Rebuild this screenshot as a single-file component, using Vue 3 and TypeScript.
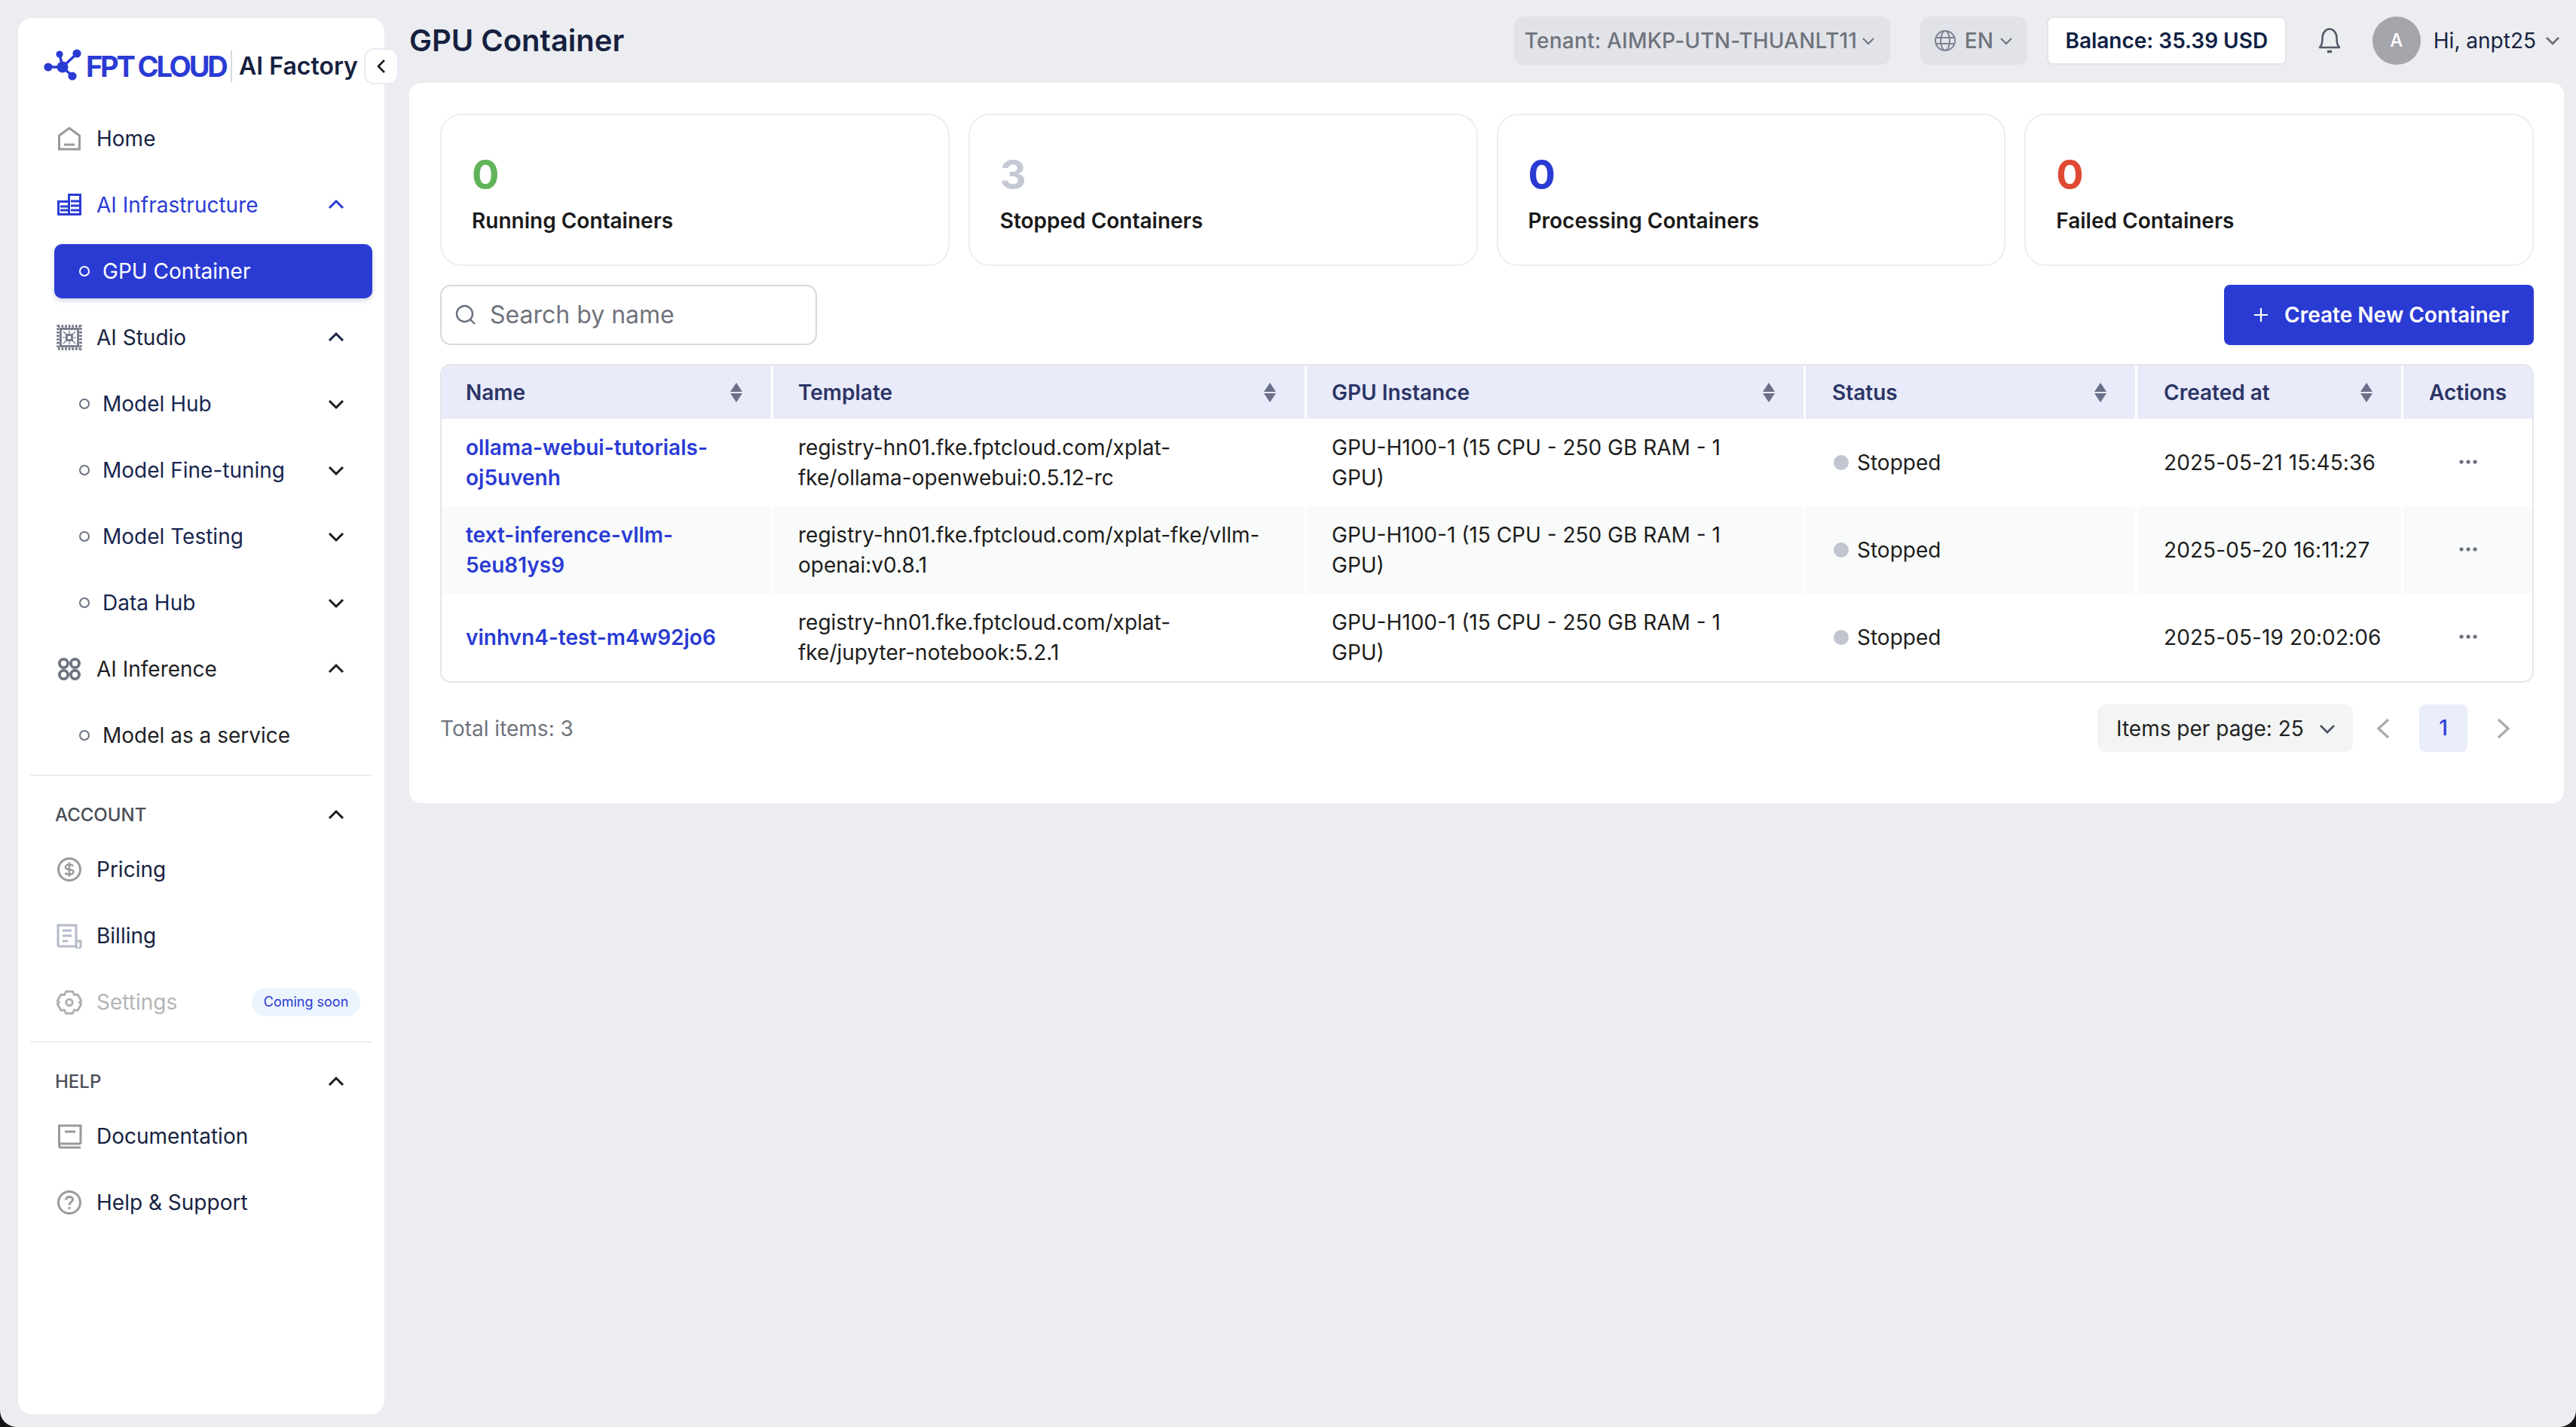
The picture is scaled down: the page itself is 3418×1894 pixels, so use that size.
<script setup lang="ts">
interface Stat { value: number; label: string; tone: string }
interface Row { name: string; template: string; instance: string; created: string }

const stats: Stat[] = [
  { value: 0, label: 'Running Containers', tone: 'green' },
  { value: 3, label: 'Stopped Containers', tone: 'grey' },
  { value: 0, label: 'Processing Containers', tone: 'blue' },
  { value: 0, label: 'Failed Containers', tone: 'red' },
]
const studioItems: string[] = ['Model Hub', 'Model Fine-tuning', 'Model Testing', 'Data Hub']
const columns: { label: string; cls: string }[] = [
  { label: 'Name', cls: 'first' },
  { label: 'Template', cls: '' },
  { label: 'GPU Instance', cls: '' },
  { label: 'Status', cls: 'wide' },
  { label: 'Created at', cls: 'wide' },
]
const instance = 'GPU-H100-1 (15 CPU - 250 GB RAM - 1 GPU)'
const rows: Row[] = [
  { name: 'ollama-webui-tutorials-oj5uvenh', template: 'registry-hn01.fke.fptcloud.com/xplat-fke/ollama-openwebui:0.5.12-rc', instance, created: '2025-05-21 15:45:36' },
  { name: 'text-inference-vllm-5eu81ys9', template: 'registry-hn01.fke.fptcloud.com/xplat-fke/vllm-openai:v0.8.1', instance, created: '2025-05-20 16:11:27' },
  { name: 'vinhvn4-test-m4w92jo6', template: 'registry-hn01.fke.fptcloud.com/xplat-fke/jupyter-notebook:5.2.1', instance, created: '2025-05-19 20:02:06' },
]
</script>

<template>
  <div class="app">
    <aside class="sidebar">
      <div class="logo">
        <svg class="logo-mark" width="52" height="52" viewBox="0 0 52 52">
          <g stroke="#2a3bd4" stroke-width="3.4" fill="none">
            <path d="M21 8 L25 25 M44 7 L25 25 M6 25 L25 25 M38 37 L25 25" />
          </g>
          <g fill="#2a3bd4">
            <circle cx="21" cy="8" r="4.6" />
            <circle cx="44" cy="7" r="5.6" />
            <circle cx="6" cy="25" r="5.6" />
            <circle cx="38" cy="37" r="5.6" />
            <circle cx="25" cy="25" r="7.5" />
          </g>
        </svg>
        <span class="logo-brand">FPT CLOUD</span>
        <span class="logo-sep"></span>
        <span class="logo-product">AI Factory</span>
      </div>
      <button class="collapse">
        <svg width="24" height="24" viewBox="0 0 24 24" fill="none" stroke="#1a1a1a" stroke-width="2.6"><path d="M16 4 L8 12 L16 20" /></svg>
      </button>

      <nav class="nav">
        <a class="item">
          <svg class="icon" width="34" height="34" viewBox="0 0 34 34" fill="none" stroke="#9a9a9a" stroke-width="3"><path d="M3.5 13 L17 3 L30.5 13 V31 H3.5 Z" /><path d="M10 25 H24" /></svg>
          <span class="label">Home</span>
        </a>
        <a class="item active-parent">
          <svg class="icon" width="34" height="34" viewBox="0 0 34 34">
            <path d="M1 11 H15 V2 H33 V30 a1 1 0 0 1 -1 1 H2 a1 1 0 0 1 -1 -1 Z" fill="#2a3bd4" />
            <rect x="4" y="14" width="11" height="14" fill="#fff" />
            <rect x="18" y="5" width="12" height="23" fill="#fff" />
            <path d="M5 19 H15 M5 24 H15 M19 12 H30 M19 18 H30 M19 24 H30" stroke="#2a3bd4" stroke-width="3" />
          </svg>
          <span class="label">AI Infrastructure</span>
          <svg class="chev" width="24" height="24" viewBox="0 0 24 24" fill="none" stroke="currentColor" stroke-width="3"><path d="M3 16 L12 7 L21 16" /></svg>
        </a>
        <a class="item sub selected">
          <span class="bullet"></span>
          <span class="label">GPU Container</span>
        </a>
        <a class="item">
          <svg class="icon" width="34" height="34" viewBox="0 0 34 34" fill="none" stroke="#6b7280">
            <rect x="2" y="2" width="30" height="30" stroke-width="3.6" stroke-dasharray="2.6 2" />
            <rect x="5.5" y="5.5" width="23" height="23" stroke-width="2.6" />
            <rect x="13.5" y="13.5" width="7" height="7" stroke-width="2.6" />
            <path d="M9 9 L13 13 M25 9 L21 13 M9 25 L13 21 M25 25 L21 21 M17 8 V12 M17 22 V26 M8 17 H12 M22 17 H26" stroke-width="1.2" />
          </svg>
          <span class="label">AI Studio</span>
          <svg class="chev" width="24" height="24" viewBox="0 0 24 24" fill="none" stroke="currentColor" stroke-width="3"><path d="M3 16 L12 7 L21 16" /></svg>
        </a>
        <a v-for="label in studioItems" :key="label" class="item sub navy">
          <span class="bullet"></span>
          <span class="label">{{ label }}</span>
          <svg class="chev" width="24" height="24" viewBox="0 0 24 24" fill="none" stroke="#1a1a1a" stroke-width="3"><path d="M3 8 L12 17 L21 8" /></svg>
        </a>
        <a class="item dark">
          <svg class="icon" width="34" height="34" viewBox="0 0 34 34" fill="none" stroke="#6f7280" stroke-width="3.8"><circle cx="9.5" cy="9.5" r="5.6" /><circle cx="24.5" cy="9.5" r="5.6" /><circle cx="9.5" cy="24.5" r="5.6" /><circle cx="24.5" cy="24.5" r="5.6" /></svg>
          <span class="label">AI Inference</span>
          <svg class="chev" width="24" height="24" viewBox="0 0 24 24" fill="none" stroke="currentColor" stroke-width="3"><path d="M3 16 L12 7 L21 16" /></svg>
        </a>
        <a class="item sub dark">
          <span class="bullet"></span>
          <span class="label">Model as a service</span>
        </a>
      </nav>

      <div class="divider"></div>
      <div class="section">
        <span>ACCOUNT</span>
        <svg class="chev" width="24" height="24" viewBox="0 0 24 24" fill="none" stroke="#1a1a1a" stroke-width="3"><path d="M3 16 L12 7 L21 16" /></svg>
      </div>
      <nav class="nav">
        <a class="item">
          <svg class="icon" width="34" height="34" viewBox="0 0 34 34" fill="none" stroke="#9a9a9a" stroke-width="3"><circle cx="17" cy="17" r="14.5" /><path d="M22 12.5 C21 11 19 10.5 17 10.5 C14 10.5 12 12 12 14 C12 19 22.5 15.5 22.5 20 C22.5 22.5 20 23.5 17 23.5 C14.5 23.5 12.5 23 11.5 21.5 M17 7.5 V26.5" stroke-width="2.6" /></svg>
          <span class="label">Pricing</span>
        </a>
        <a class="item">
          <svg class="icon" width="34" height="34" viewBox="0 0 34 34" fill="none" stroke="#b4bac8" stroke-width="3"><path d="M26 31 H4 a2 2 0 0 1 -2 -2 V3 H26 V31 a3 3 0 0 0 6 0 V24 H26" /><path d="M8 10 H20 M8 17 H20 M8 24 H15" /></svg>
          <span class="label">Billing</span>
        </a>
        <a class="item disabled">
          <svg class="icon" width="34" height="34" viewBox="0 0 34 34" fill="none" stroke="#b0b0b0" stroke-width="3"><path d="M12.5 3 H21.5 L23.5 7.5 L28 7 L33 15.5 L30.5 17.5 L33 19.5 L28 28 L23.5 27.5 L21.5 32 H12.5 L10.5 27.5 L6 28 L1 19.5 L3.5 17.5 L1 15.5 L6 7 L10.5 7.5 Z" stroke-linejoin="round" /><circle cx="17" cy="17.5" r="4.2" /></svg>
          <span class="label">Settings</span>
          <span class="soon">Coming soon</span>
        </a>
      </nav>

      <div class="divider"></div>
      <div class="section">
        <span>HELP</span>
        <svg class="chev" width="24" height="24" viewBox="0 0 24 24" fill="none" stroke="#1a1a1a" stroke-width="3"><path d="M3 16 L12 7 L21 16" /></svg>
      </div>
      <nav class="nav">
        <a class="item">
          <svg class="icon" width="34" height="34" viewBox="0 0 34 34" fill="none" stroke="#98999e" stroke-width="3"><path d="M32 27 H6 a2.5 2.5 0 0 0 0 5 H32 M3.5 29 V3 H32 V27" /><path d="M11 11 H25" /></svg>
          <span class="label">Documentation</span>
        </a>
        <a class="item">
          <svg class="icon" width="34" height="34" viewBox="0 0 34 34" fill="none" stroke="#9a9a9a" stroke-width="3"><circle cx="17" cy="17" r="14.5" /><path d="M12.5 13.5 C12.5 10.5 15 9.5 17 9.5 C19.5 9.5 21.5 11 21.5 13.3 C21.5 16.5 17 16.5 17 20.5" /><path d="M17 23 V26" /></svg>
          <span class="label">Help &amp; Support</span>
        </a>
      </nav>
    </aside>

    <div class="content">
      <header class="topbar">
        <h1 class="title">GPU Container</h1>
        <div class="tenant">
          <span>Tenant: AIMKP-UTN-THUANLT11</span>
          <svg width="20" height="20" viewBox="0 0 20 20" fill="none" stroke="#6b7280" stroke-width="2"><path d="M3 7 L10 14 L17 7" /></svg>
        </div>
        <div class="lang">
          <svg width="30" height="30" viewBox="0 0 30 30" fill="none" stroke="#7c8493" stroke-width="2"><circle cx="15" cy="15" r="13" /><ellipse cx="15" cy="15" rx="6" ry="13" /><path d="M2.5 11 H27.5 M2.5 19 H27.5" /></svg>
          <span>EN</span>
          <svg class="lang-chev" width="20" height="20" viewBox="0 0 20 20" fill="none" stroke="#6b7280" stroke-width="2"><path d="M3 7 L10 14 L17 7" /></svg>
        </div>
        <div class="balance">Balance: 35.39 USD</div>
        <svg class="bell" width="36" height="36" viewBox="0 0 36 36" fill="none" stroke="#555b68" stroke-width="2.6"><path d="M5 27 C8 24 8.5 21 8.5 15 C8.5 8 12.5 2.5 18 2.5 C23.5 2.5 27.5 8 27.5 15 C27.5 21 28 24 31 27 Z" stroke-linejoin="round" /><path d="M15 32.5 H21" stroke-width="3.4" /></svg>
        <div class="avatar">A</div>
        <span class="hello">Hi, anpt25</span>
        <svg class="user-chev" width="24" height="24" viewBox="0 0 24 24" fill="none" stroke="#6b6b6b" stroke-width="2.6"><path d="M4 8 L12 16 L20 8" /></svg>
      </header>

      <main class="panel">
        <section class="stats">
          <div v-for="stat in stats" :key="stat.label" class="stat">
            <div class="stat-value" :class="stat.tone">{{ stat.value }}</div>
            <div class="stat-label">{{ stat.label }}</div>
          </div>
        </section>

        <section class="toolbar">
          <div class="search">
            <svg width="30" height="30" viewBox="0 0 30 30" fill="none" stroke="#6b7280" stroke-width="2.4"><circle cx="13.5" cy="13.5" r="10.5" /><path d="M21 21 L27 27" /></svg>
            <span>Search by name</span>
          </div>
          <button class="create">
            <svg width="22" height="22" viewBox="0 0 22 22" fill="none" stroke="#fff" stroke-width="2.2"><path d="M11 2 V20 M2 11 H20" /></svg>
            <span>Create New Container</span>
          </button>
        </section>

        <div class="table-wrap">
          <table class="table">
            <colgroup>
              <col class="c1" /><col class="c2" /><col class="c3" /><col class="c4" /><col class="c5" /><col class="c6" />
            </colgroup>
            <thead>
              <tr>
                <th v-for="col in columns" :key="col.label" :class="col.cls">
                  <div class="th-inner">
                    <span>{{ col.label }}</span>
                    <svg width="18" height="26" viewBox="0 0 18 26" fill="#6b7088"><path d="M9 0 L17 12 H1 Z" /><path d="M9 26 L1 14 H17 Z" /></svg>
                  </div>
                </th>
                <th class="actions">Actions</th>
              </tr>
            </thead>
            <tbody>
              <tr v-for="row in rows" :key="row.name">
                <td class="first"><a class="link">{{ row.name }}</a></td>
                <td>{{ row.template }}</td>
                <td class="instance">{{ row.instance }}</td>
                <td class="wide"><span class="status"><i class="dot"></i>Stopped</span></td>
                <td class="wide created">{{ row.created }}</td>
                <td class="actions">
                  <svg class="more" width="26" height="8" viewBox="0 0 26 8" fill="#6b7280"><circle cx="4" cy="4" r="2.6" /><circle cx="13" cy="4" r="2.6" /><circle cx="22" cy="4" r="2.6" /></svg>
                </td>
              </tr>
            </tbody>
          </table>
        </div>

        <section class="footer">
          <span class="total">Total items: 3</span>
          <div class="per-page">
            <span>Items per page: 25</span>
            <svg width="24" height="24" viewBox="0 0 24 24" fill="none" stroke="#4b5563" stroke-width="2.8"><path d="M3 8 L12 17 L21 8" /></svg>
          </div>
          <svg class="pager-arrow prev" width="20" height="30" viewBox="0 0 20 30" fill="none" stroke="#a8aab0" stroke-width="3.2"><path d="M17 3 L4 15 L17 27" /></svg>
          <span class="page-current">1</span>
          <svg class="pager-arrow next" width="20" height="30" viewBox="0 0 20 30" fill="none" stroke="#a8aab0" stroke-width="3.2"><path d="M3 3 L16 15 L3 27" /></svg>
        </section>
      </main>
    </div>
  </div>
</template>

<style scoped>
.app {
  display: flex;
  align-items: flex-start;
  width: 3418px;
  height: 1894px;
  background: #ebedf1;
  border-radius: 0 0 22px 22px;
  overflow: hidden;
  font-family: Inter, "Noto Sans", sans-serif;
  font-size: 28px;
  line-height: 40px;
  color: #1c1c1c;
  box-sizing: border-box;
}
.sidebar {
  position: relative;
  width: 486px;
  height: 1853px;
  margin: 24px 0 0 24px;
  padding: 0 16px;
  background: #fff;
  border-radius: 18px;
  flex: none;
  box-sizing: border-box;
}
.logo {
  display: flex;
  align-items: center;
  height: 124px;
  padding: 4px 0 0 18px;
  white-space: nowrap;
  box-sizing: border-box;
}
.logo-mark { flex: none; margin-right: 4px; margin-top: 4px; }
.logo-brand {
  font-weight: 700;
  font-size: 38px;
  letter-spacing: -3.2px;
  word-spacing: 0;
  color: #2a3bd4;
  width: 190px;
  flex: none;
}
.logo-sep {
  width: 2px;
  height: 42px;
  margin: 0 9px 0 2px;
  background: #d8d9dc;
  flex: none;
}
.logo-product {
  font-weight: 600;
  font-size: 32px;
  color: #16213f;
}
.collapse {
  position: absolute;
  top: 40px;
  left: 459px;
  width: 46px;
  height: 48px;
  padding: 0;
  display: flex;
  align-items: center;
  justify-content: center;
  background: #fff;
  border: 2px solid #e8ebf3;
  border-radius: 14px;
}
.nav {
  display: flex;
  flex-direction: column;
  gap: 16px;
  padding-left: 32px;
}
.item {
  display: flex;
  align-items: center;
  height: 72px;
  padding: 0 36px 0 3px;
  border-radius: 10px;
  color: #17233f;
  box-sizing: border-box;
  flex: none;
}
.icon { flex: none; margin-right: 19px; }
.label { flex: 1; white-space: nowrap; }
.chev { flex: none; }
.active-parent { color: #2a3bd4; }
.item.sub { padding-left: 33px; }
.bullet {
  width: 14px;
  height: 14px;
  margin-right: 17px;
  border: 2px solid #6b7280;
  border-radius: 50%;
  box-sizing: border-box;
  flex: none;
}
.selected {
  background: #2a3bd4;
  color: #fff;
  box-shadow: 0 3px 6px rgba(30, 40, 120, 0.2);
}
.selected .bullet { border-color: #fff; }
.navy { color: #17264f; }
.dark { color: #1f1f24; }
.disabled { color: #b5b5b5; padding-right: 16px; }
.soon {
  flex: none;
  width: 144px;
  height: 38px;
  line-height: 38px;
  text-align: center;
  font-size: 18px;
  color: #2a3bd4;
  background: #ecf4fe;
  border-radius: 19px;
}
.divider {
  height: 2px;
  margin-top: 16px;
  background: #eceef0;
}
.section {
  display: flex;
  align-items: center;
  justify-content: space-between;
  height: 40px;
  margin: 32px 0 16px;
  padding: 0 36px 0 33px;
  font-size: 24px;
  font-weight: 500;
  color: #4b4f58;
}
.content {
  flex: 1;
  min-width: 0;
  margin: 0 16px 0 33px;
}
.topbar {
  display: flex;
  align-items: center;
  height: 110px;
  padding-bottom: 2px;
  box-sizing: border-box;
}
.title {
  flex: 1;
  margin: 0;
  font-size: 40px;
  line-height: 48px;
  font-weight: 600;
  color: #16213f;
}
.tenant, .lang {
  display: flex;
  align-items: center;
  height: 64px;
  background: #e1e3e8;
  border-radius: 12px;
  color: #6f737c;
  font-weight: 500;
  white-space: nowrap;
  box-sizing: border-box;
}
.tenant { width: 499px; padding: 0 10px 0 14px; gap: 5px; margin-right: 40px; letter-spacing: 0.2px; }
.lang { width: 142px; padding: 0 14px 0 18px; gap: 11px; margin-right: 26px; }
.lang-chev { margin-left: -4px; }
.balance {
  width: 318px;
  height: 64px;
  line-height: 60px;
  text-align: center;
  background: #fff;
  border: 2px solid #e2e4e9;
  border-radius: 8px;
  color: #101f44;
  font-weight: 600;
  box-sizing: border-box;
  white-space: nowrap;
}
.bell { margin: 0 39px 0 39px; flex: none; }
.avatar {
  width: 64px;
  height: 64px;
  line-height: 64px;
  text-align: center;
  border-radius: 50%;
  background: #a4a6ac;
  color: #fff;
  font-size: 24px;
  font-weight: 500;
  flex: none;
}
.hello { margin-left: 17px; color: #17233f; white-space: nowrap; }
.user-chev { margin: 0 3px 0 10px; flex: none; }

.panel {
  background: #fff;
  border-radius: 16px;
  padding: 41px 40px 69px 41px;
  height: 956px;
  box-sizing: border-box;
}
.stats {
  display: grid;
  grid-template-columns: repeat(4, 1fr);
  column-gap: 25px;
}
.stat {
  height: 202px;
  padding: 47px 39px 0 40px;
  border: 2px solid #eceef1;
  border-radius: 28px;
  box-sizing: border-box;
}
.stat-value {
  font-size: 54px;
  line-height: 64px;
  font-weight: 700;
}
.stat-value.green { color: #61b35a; }
.stat-value.grey { color: #c4c9d4; }
.stat-value.blue { color: #2a3bd4; }
.stat-value.red { color: #e04a32; }
.stat-label {
  margin-top: 9px;
  font-weight: 600;
  color: #1a1a1a;
}
.toolbar {
  display: flex;
  align-items: center;
  justify-content: space-between;
  margin-top: 25px;
  height: 80px;
}
.search {
  display: flex;
  align-items: center;
  width: 500px;
  height: 80px;
  padding-left: 17px;
  gap: 17px;
  border: 2px solid #d8d9dc;
  border-radius: 14px;
  box-sizing: border-box;
  color: #6f737c;
  font-size: 32px;
}
.create {
  display: flex;
  align-items: center;
  gap: 20px;
  width: 411px;
  height: 80px;
  padding: 0 0 0 38px;
  background: #2a3bd4;
  border: none;
  border-radius: 8px;
  color: #fff;
  font-family: inherit;
  font-size: 28px;
  font-weight: 600;
  box-sizing: border-box;
  white-space: nowrap;
}
.table-wrap {
  margin-top: 25px;
  border: 2px solid #e4e6ea;
  border-radius: 14px;
  overflow: hidden;
}
.table {
  width: 100%;
  table-layout: fixed;
  border-collapse: separate;
  border-spacing: 0;
}
.c1 { width: 440px; }
.c2 { width: 708px; }
.c3 { width: 662px; }
.c4 { width: 440px; }
.c5 { width: 353px; }
.c6 { width: 171px; }
th {
  height: 71px;
  padding: 0 37px 0 33px;
  background: #e9ebfa;
  border-right: 3px solid #fff;
  font-weight: 600;
  text-align: left;
  color: #2c3566;
  box-sizing: border-box;
}
.th-inner {
  display: flex;
  align-items: center;
  justify-content: space-between;
}
td {
  height: 116px;
  padding: 0 33px;
  border-right: 3px solid #fff;
  box-sizing: border-box;
  vertical-align: middle;
}
tbody tr:nth-child(2) td { background: #f9fbfa; }
th:last-child, td:last-child { border-right: none; }
th.first, td.first { padding-left: 32px; }
th.wide, td.wide { padding-left: 35px; }
td.instance { padding-right: 60px; }
td.created { padding-right: 0; white-space: nowrap; letter-spacing: 0.1px; }
.actions { text-align: center; padding: 0; }
.more { display: block; margin: -2px auto 0; }
.link { color: #2a3bd4; font-weight: 600; }
.status { display: flex; align-items: center; padding-left: 2px; }
.dot {
  width: 20px;
  height: 20px;
  margin-right: 11px;
  border-radius: 50%;
  background: #c0c5d0;
  flex: none;
}
.footer {
  display: flex;
  align-items: center;
  height: 63px;
  margin-top: 29px;
}
.total { flex: 1; color: #6f737c; }
.per-page {
  display: flex;
  align-items: center;
  justify-content: space-between;
  width: 339px;
  height: 63px;
  padding: 0 22px 0 25px;
  background: #f3f5f4;
  border-radius: 10px;
  box-sizing: border-box;
  color: #222;
}
.pager-arrow { flex: none; }
.pager-arrow.prev { margin: 0 38px 0 30px; }
.pager-arrow.next { margin: 0 30px 0 38px; }
.page-current {
  width: 64px;
  height: 63px;
  line-height: 63px;
  text-align: center;
  background: #eaedfb;
  border-radius: 8px;
  color: #2a3bd4;
  font-weight: 500;
  flex: none;
}
</style>

<style>
html, body {
  margin: 0;
  background: #141414;
  overflow: hidden;
}
</style>
